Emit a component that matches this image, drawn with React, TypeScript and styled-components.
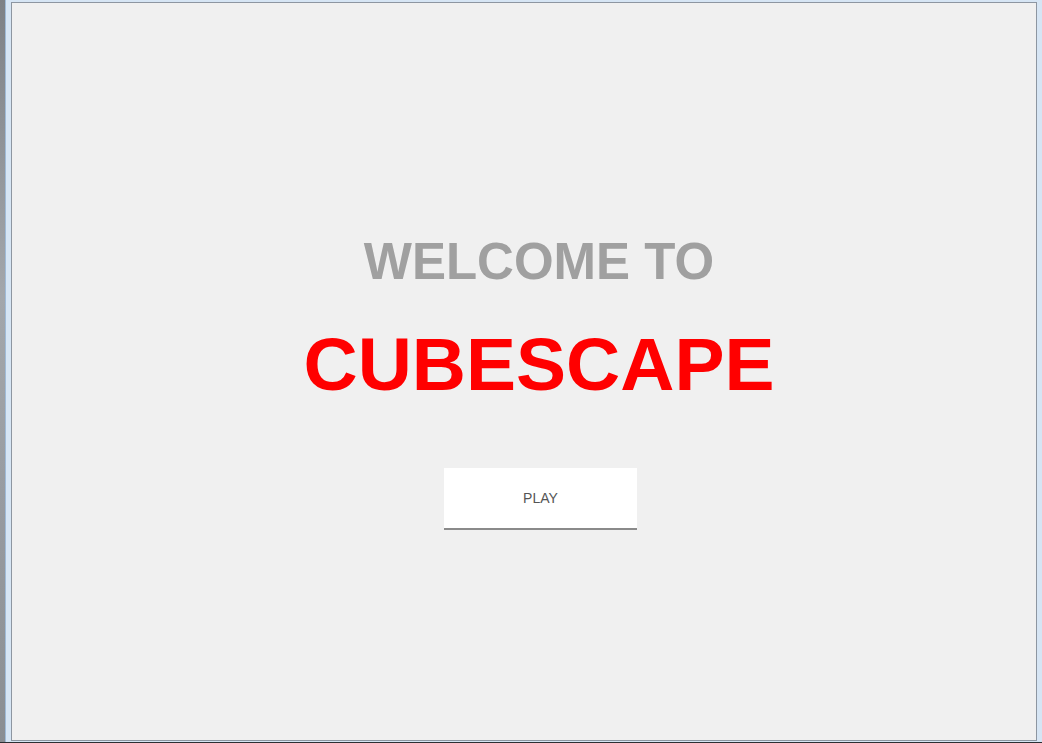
import styled, { createGlobalStyle } from "styled-components";

const GlobalStyle = createGlobalStyle`
  html, body {
    margin: 0;
    padding: 0;
    height: 743px;
    overflow: hidden;
    font-family: "Liberation Sans", Arial, sans-serif;
  }
`;

const Desktop = styled.div`
  display: flex;
  width: 1042px;
  height: 743px;
  background: #d6e5f4;
  border-bottom: 1px solid #2c2f33;
  box-sizing: border-box;
`;

const DeskStrip = styled.div`
  width: 5px;
  background: linear-gradient(#7d8186, #a3a7ac 40%, #8a8e93);
`;

const Frame = styled.div`
  flex: 1;
  display: flex;
  padding: 2px 5px 1px 5px;
  border-left: 1px solid #9fbbd8;
`;

const Panel = styled.main`
  flex: 1;
  display: flex;
  flex-direction: column;
  align-items: center;
  background: #f0f0f0;
  border: 1px solid #8d96a1;
  padding: 230px 0 0 30px;
`;

const Welcome = styled.h2`
  margin: 0;
  font-size: 51px;
  line-height: 57px;
  font-weight: 700;
  color: #a0a0a0;
`;

const Title = styled.h1`
  margin: 32px 0 0;
  font-size: 75px;
  line-height: 84px;
  font-weight: 700;
  color: #ff0000;
`;

const PlayButton = styled.button`
  margin-top: 62px;
  margin-left: 3px;
  width: 193px;
  height: 62px;
  background: #ffffff;
  border: none;
  border-bottom: 2px solid #8a8a8a;
  font-family: "Liberation Sans", Arial, sans-serif;
  font-size: 14px;
  color: #555555;
  cursor: pointer;
`;

export default function App() {
  return (
    <>
      <GlobalStyle />
      <Desktop>
        <DeskStrip />
        <Frame>
          <Panel>
            <Welcome>WELCOME TO</Welcome>
            <Title>CUBESCAPE</Title>
            <PlayButton>PLAY</PlayButton>
          </Panel>
        </Frame>
      </Desktop>
    </>
  );
}
